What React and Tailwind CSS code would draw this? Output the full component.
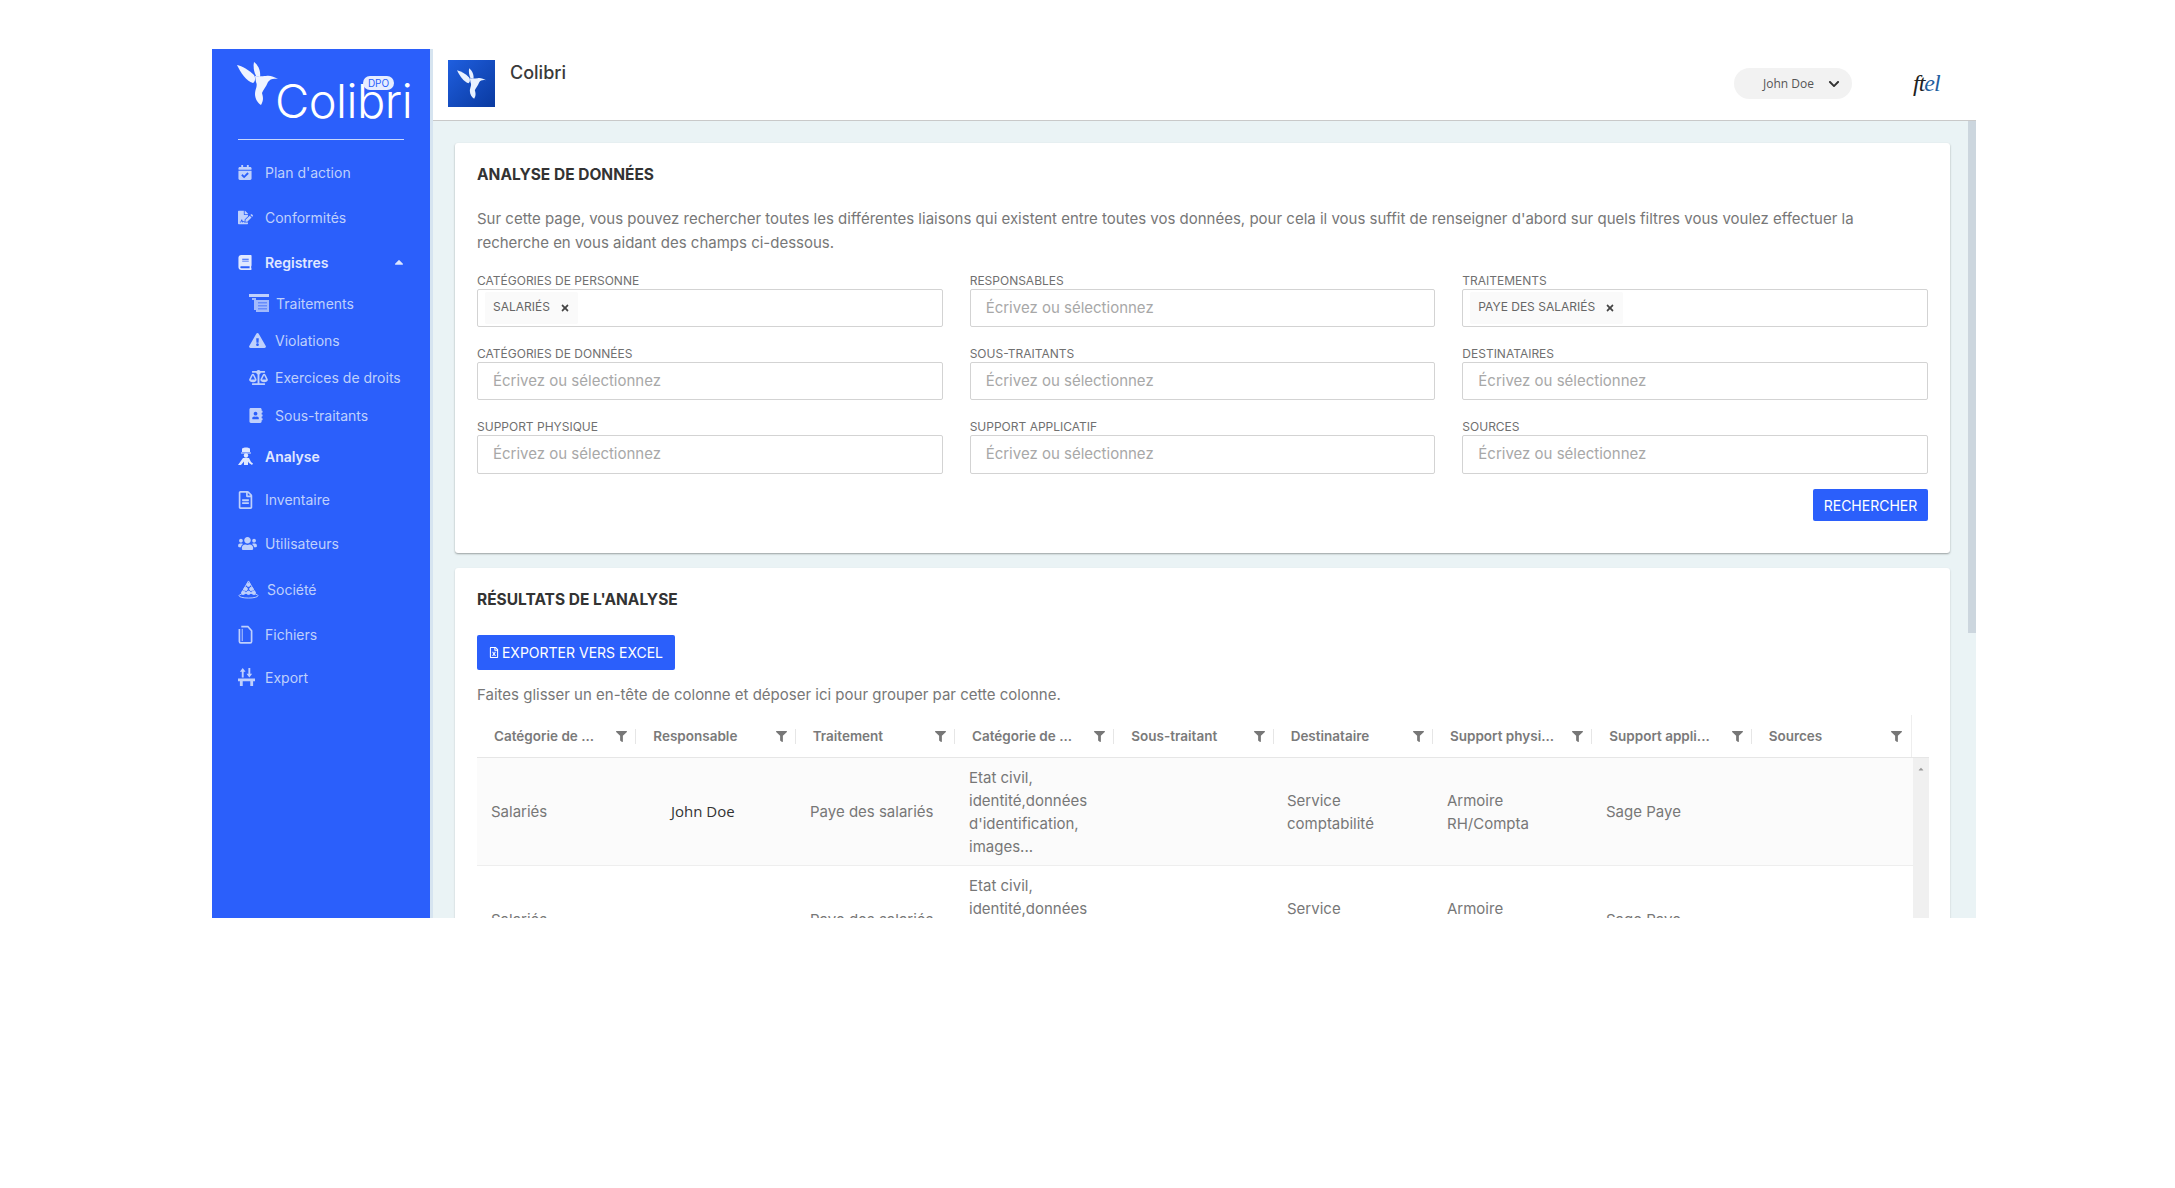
import React from "react";
import {
  FaCalendarCheck, FaFileSignature, FaBook, FaExclamationTriangle, FaBalanceScale, FaAddressBook,
  FaRegFileAlt, FaUsers, FaFilter, FaTimes, FaRegFileExcel, FaCaretUp, FaChevronDown, FaCaretUp as Up,
} from "react-icons/fa";

const FONT = "font-['Inter','Liberation_Sans',sans-serif]";

function Bird({ className }) {
  return (
    <svg viewBox="0 0 42 43" className={className} fill="currentColor">
      <path d="M0 3 C5 4 12 8 17 13 C19 16 18 20 16 21 C9 19 4 11 0 3Z" />
      <path d="M17 0 C21 3 24 9 23 15 L19 14 C17 10 16 5 17 0Z" />
      <path d="M18 14 C22 15 26 14 29 14 C33 13 37 15 41 17 C36 16 33 17 31 20 C29 25 26 28 25 31 C26 35 27 38 24 43 C21 41 18 37 18 32 C18 27 21 24 19 20Z" />
    </svg>
  );
}

const TableIcon = (p) => (
  <svg viewBox="0 0 20 18" fill="currentColor" {...p}>
    <path d="M0 0h20v3H0z" />
    <path d="M3 4h4v2h13v12H7v-2H5V6H3z" opacity=".8" />
    <path d="M9 8h9v1.5H9zM9 11h9v1.5H9zM9 14h9v1.5H9z" fill="#2b5ffb" opacity=".5" />
  </svg>
);
const AnalyseIcon = (p) => (
  <svg viewBox="0 0 16 18" fill="currentColor" {...p}>
    <path d="M4 1.5C6 0 10 0 12 1.5V5H4z" />
    <path d="M3 5.5h10v1H3z" />
    <circle cx="8" cy="8.5" r="2.2" />
    <path d="M5 11h6l2 4 2 1.5-1 1.5-3-2-1-1.5V18H6v-3.5L3 18H0l2.5-3.5z" />
  </svg>
);
const SocieteIcon = (p) => (
  <svg viewBox="0 0 22 20" fill="none" stroke="currentColor" strokeWidth="1" {...p}>
    <path d="M11 1 4 13h14z" />
    <circle cx="11" cy="5" r="1.8" fill="currentColor" />
    <circle cx="8" cy="9.5" r="1.8" fill="currentColor" />
    <circle cx="14" cy="9.5" r="1.8" fill="currentColor" />
    <circle cx="5.5" cy="13.5" r="1.8" fill="currentColor" />
    <circle cx="11" cy="13.5" r="1.8" fill="currentColor" />
    <circle cx="16.5" cy="13.5" r="1.8" fill="currentColor" />
    <ellipse cx="11" cy="16.5" rx="10" ry="2.5" />
  </svg>
);
const FileIcon = (p) => (
  <svg viewBox="0 0 16 20" fill="none" stroke="currentColor" strokeWidth="1.8" {...p}>
    <path d="M1.5 4v13.5q0 1.500 1.500 1.500h10q1.500 0 1.500-1.500V6L10.500 1.500H3.500" />
    <path d="M4.500 4v13" strokeWidth="1" />
  </svg>
);
const ExportIcon = (p) => (
  <svg viewBox="0 0 18 19" fill="currentColor" {...p}>
    <path d="M5 0 2 4h2v6h2V4h2zM12 10l3-4h-2V0h-2v6H9z" />
    <path d="M0 11h18v3h-2v5h-3v-5H5v5H2v-5H0z" />
  </svg>
);

const nav = [
  { label: "Plan d'action", Icon: FaCalendarCheck, h: "h-[45px]", ic: "w-[14px] h-[15px]", gap: "w-[27px]" },
  { label: "Conformités", Icon: FaFileSignature, h: "h-[45px]", ic: "w-[15px] h-[17px]", gap: "w-[27px]" },
  { label: "Registres", Icon: FaBook, h: "h-[44px]", ic: "w-[14px] h-[15px]", gap: "w-[27px]", bold: true, caret: true },
  { label: "Traitements", Icon: TableIcon, h: "h-[38px]", ic: "w-[20px] h-[18px]", gap: "w-[27px]", sub: true },
  { label: "Violations", Icon: FaExclamationTriangle, h: "h-[37px]", ic: "w-[17px] h-[15px]", gap: "w-[26px]", sub: true },
  { label: "Exercices de droits", Icon: FaBalanceScale, h: "h-[37px]", ic: "w-[19px] h-[15px]", gap: "w-[26px]", sub: true },
  { label: "Sous-traitants", Icon: FaAddressBook, h: "h-[38px]", ic: "w-[14px] h-[15px]", gap: "w-[26px]", sub: true },
  { label: "Analyse", Icon: AnalyseIcon, h: "h-[44px]", ic: "w-[16px] h-[18px]", gap: "w-[27px]", bold: true },
  { label: "Inventaire", Icon: FaRegFileAlt, h: "h-[43px]", ic: "w-[15px] h-[18px]", gap: "w-[27px]" },
  { label: "Utilisateurs", Icon: FaUsers, h: "h-[45px]", ic: "w-[19px] h-[15px]", gap: "w-[27px]" },
  { label: "Société", Icon: SocieteIcon, h: "h-[46px]", ic: "w-[21px] h-[19px]", gap: "w-[29px]" },
  { label: "Fichiers", Icon: FileIcon, h: "h-[44px]", ic: "w-[15px] h-[19px]", gap: "w-[27px]" },
  { label: "Export", Icon: ExportIcon, h: "h-[42px]", ic: "w-[17px] h-[18px]", gap: "w-[27px]" },
];

function Sidebar() {
  return (
    <aside className="w-[218px] shrink-0 h-full bg-[#2b5ffb] flex flex-col">
      <div className="h-[91px] mx-[26px] border-b border-[#c7d7fb] relative shrink-0 text-white">
        <Bird className="absolute left-[-1px] top-[13px] w-[42px] h-[43px] text-[#f0f4ff]" />
        <span className="absolute left-[37px] top-[24px] text-[47px] leading-[56px] font-light tracking-[-0.5px]">Colibri</span>
        <span className="absolute left-[125px] top-[27px] w-[31px] h-[14px] rounded-full bg-[#e6edff] text-[#2b5ffb] text-[10px] leading-[14px] text-center">DPO</span>
      </div>
      <nav className="mt-[10px] flex flex-col">
        {nav.map(({ label, Icon, h, ic, gap, bold, sub, caret }) => (
          <div key={label} className={`${h} flex items-center ${sub ? "pl-[37px]" : "pl-[26px]"} pr-[24px] ${bold ? "text-[#e0e8ff] font-semibold" : "text-[#bfd0fc]"}`}>
            <span className={`${gap} shrink-0 flex items-center`}>
              <Icon className={ic} />
            </span>
            <span className="text-[14px] whitespace-nowrap">{label}</span>
            {caret && <FaCaretUp className="ml-auto w-[14px] h-[14px] text-[#dbe5ff]" />}
          </div>
        ))}
      </nav>
    </aside>
  );
}

function Field({ label, chip, className }) {
  return (
    <div className="flex flex-col">
      <label className="h-[17px] text-[12px] leading-[17px] text-[#707070] uppercase whitespace-nowrap">{label}</label>
      <div className={`${className} border border-[#d3d3d3] rounded-[2px] flex items-center px-[7px] bg-white`}>
        {chip ? (
          <span className="h-[32px] flex items-center gap-[10px] px-[8px] bg-[#fafafa] rounded-[2px] text-[12px] text-[#666] uppercase">
            <span className="mb-[3px]">{chip}</span>
            <FaTimes className="w-[10px] h-[10px] text-[#444]" />
          </span>
        ) : (
          <span className="px-[8px] text-[15px] text-[#a8a8a8]">Écrivez ou sélectionnez</span>
        )}
      </div>
    </div>
  );
}

const heads = ["Catégorie de ...", "Responsable", "Traitement", "Catégorie de ...", "Sous-traitant", "Destinataire", "Support physi...", "Support appli...", "Sources"];

function Cell({ children, className = "" }) {
  return <div className={`flex items-center pl-[14px] text-[15px] leading-[23px] text-[#777] ${className}`}><div>{children}</div></div>;
}

function Row({ first }) {
  return (
    <div className={`grid grid-cols-[159px_160px_159px_159px_159px_160px_159px_160px_160px] h-[108px] shrink-0 border-b border-[#eeeeee] ${first ? "bg-[#fbfbfb]" : "bg-white"}`}>
      <Cell>Salariés</Cell>
      <Cell className="!pl-[35px] font-['Open_Sans','Liberation_Sans',sans-serif] !text-[#333]">{first ? "John Doe" : ""}</Cell>
      <Cell>Paye des salariés</Cell>
      <Cell>Etat civil,<br />identité,données<br />d'identification,<br />images...</Cell>
      <Cell />
      <Cell>Service<br />comptabilité</Cell>
      <Cell>Armoire<br />RH/Compta</Cell>
      <Cell>Sage Paye</Cell>
      <Cell />
    </div>
  );
}

export default function App() {
  return (
    <div className={`${FONT} bg-white min-h-[1188px] pl-[212px] pt-[49px]`}>
      <div className="w-[1764px] h-[869px] flex overflow-hidden">
        <Sidebar />
        <main className="flex-1 min-w-0 flex flex-col border-l-[3px] border-[#d6e4f0]">
          <header className="h-[72px] shrink-0 bg-white border-b border-[#c9c9c9] flex items-start pl-[15px] pr-[29px]">
            <div className="mt-[11px] w-[47px] h-[47px] bg-gradient-to-br from-[#1f5fe0] to-[#0a3aa0] flex items-center justify-center">
              <Bird className="w-[30px] h-[31px] text-[#e8f1ff]" />
            </div>
            <span className="ml-[15px] mt-[11px] text-[18px] leading-[26px] font-medium text-[#3a3a3a]">Colibri</span>
            <div className="ml-auto mt-[19px] w-[118px] h-[31px] rounded-full bg-[#f2f2f2] flex items-center pl-[29px] pr-[12px] text-[12px] text-[#555] font-['Open_Sans',sans-serif]">
              <span>John Doe</span>
              <FaChevronDown className="ml-auto w-[12px] h-[12px] text-[#333]" />
            </div>
            <div className="ml-[61px] mt-[21px] w-[34px] font-['Liberation_Serif',serif] italic text-[24px] leading-[26px] text-[#222] tracking-[-1px]">
              ft<span className="text-[#1f5f9f]">el</span>
            </div>
          </header>
          <div className="flex-1 min-h-0 bg-[#eaf3f5] flex justify-between overflow-hidden">
            <div className="w-[1517px] pl-[22px] pt-[22px] flex flex-col gap-[15px]">
              <section className="h-[410px] shrink-0 bg-white rounded-[3px] shadow-[0_1px_2px_rgba(0,0,0,0.35)] px-[22px] pt-[21px]">
                <h2 className="text-[15.5px] leading-[22px] font-bold text-[#333] uppercase">Analyse de données</h2>
                <p className="mt-[21px] text-[15px] leading-[24px] text-[#777]">
                  Sur cette page, vous pouvez rechercher toutes les différentes liaisons qui existent entre toutes vos données, pour cela il vous suffit de renseigner d'abord sur quels filtres vous voulez effectuer la
                  <br />recherche en vous aidant des champs ci-dessous.
                </p>
                <div className="mt-[17px] grid grid-cols-3 gap-x-[27px] gap-y-[18px]">
                  <Field label="Catégories de personne" chip="Salariés" className="h-[38px]" />
                  <Field label="Responsables" className="h-[38px]" />
                  <Field label="Traitements" chip="Paye des salariés" className="h-[38px]" />
                  <Field label="Catégories de données" className="h-[38px]" />
                  <Field label="Sous-traitants" className="h-[38px]" />
                  <Field label="Destinataires" className="h-[38px]" />
                  <Field label="Support physique" className="h-[39px]" />
                  <Field label="Support applicatif" className="h-[39px]" />
                  <Field label="Sources" className="h-[39px]" />
                </div>
                <div className="mt-[15px] flex justify-end">
                  <button className="w-[115px] h-[32px] rounded-[2px] bg-[#2b5ffb] text-white text-[14px] uppercase">Rechercher</button>
                </div>
              </section>
              <section className="shrink-0 bg-white rounded-[3px] shadow-[0_1px_2px_rgba(0,0,0,0.2)] px-[22px] pt-[21px] h-[400px]">
                <h2 className="text-[15.5px] leading-[22px] font-bold text-[#333] uppercase">Résultats de l'analyse</h2>
                <button className="mt-[24px] w-[198px] h-[35px] rounded-[2px] bg-[#2b5ffb] text-white text-[14px] uppercase flex items-center justify-center gap-[3px]">
                  <FaRegFileExcel className="w-[10px] h-[11px]" />
                  Exporter vers Excel
                </button>
                <p className="mt-[14px] text-[15px] leading-[22px] text-[#777]">Faites glisser un en-tête de colonne et déposer ici pour grouper par cette colonne.</p>
                <div className="mt-[9px] w-[1452px]">
                  <div className="w-[1435px] h-[42px] flex border-r border-[#eeeeee]">
                    {heads.map((h, i) => (
                      <div key={i} className="flex-1 min-w-0 flex items-center pl-[17px] pr-[9px] relative">
                        <span className="text-[13.5px] font-semibold text-[#7a7a7a] whitespace-nowrap">{h}</span>
                        <FaFilter className="ml-auto w-[11px] h-[11px] text-[#777]" />
                        {i < 8 && <span className="absolute right-0 top-[14px] h-[15px] w-px bg-[#e6e6e6]" />}
                      </div>
                    ))}
                  </div>
                  <div className="flex border-t border-[#e6e6e6]">
                    <div className="w-[1436px] flex flex-col">
                      <Row first />
                      <Row />
                    </div>
                    <div className="w-[16px] bg-[#f0f0f0] flex flex-col items-center pt-[7px]">
                      <Up className="w-[10px] h-[8px] text-[#999]" />
                    </div>
                  </div>
                </div>
              </section>
            </div>
            <div className="w-[8px] h-[512px] bg-[#ccd6de] shrink-0" />
          </div>
        </main>
      </div>
    </div>
  );
}
